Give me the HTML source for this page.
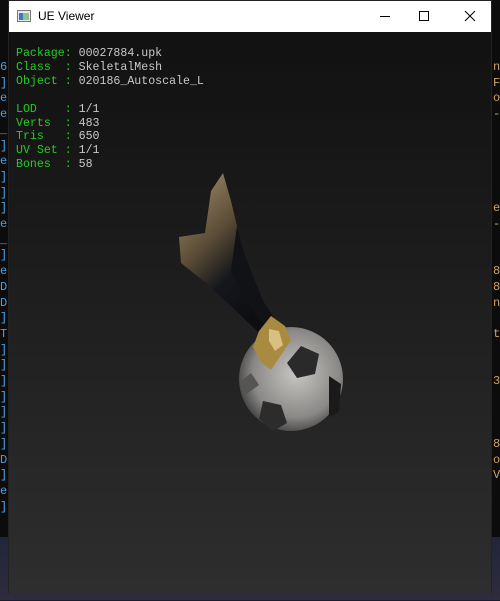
<!DOCTYPE html>
<html><head><style>
body{margin:0;width:500px;height:600px;overflow:hidden;background:#1a1d2a;position:relative;font-family:"Liberation Mono",monospace}
.bg{position:absolute;left:0;top:0;width:500px;height:537px;background:#0c0c0c}
.wall{position:absolute;left:0;top:537px;width:500px;height:63px;background:linear-gradient(#22263a,#2e2b3e)}
.ls{position:absolute;left:0;top:60px;font-size:12px;line-height:15.7px;color:#4aa0e0}
.rs{position:absolute;left:493px;top:60px;font-size:12px;line-height:15.7px;color:#d0a060}
.win{position:absolute;left:8px;top:0;width:484px;height:593px;border:1px solid #222;box-sizing:border-box}
.title{height:31px;background:#fff;position:relative;font-family:"Liberation Sans",sans-serif;font-size:12px}
.body{height:561px;background:linear-gradient(#111 0%,#1c1c1c 40%,#2e2e2e 100%);position:relative}
.info{position:absolute;left:7px;top:15px;font-size:11.6px;line-height:13.9px;color:#c8c8c8;white-space:pre}
.g{color:#22cc22}
</style></head><body>
<div class="bg"></div><div class="wall"></div>
<div class="ls">6<br>]<br>e<br>e<br>_<br>]<br>e<br>]<br>]<br>]<br>e<br>_<br>]<br>e<br>D<br>D<br>]<br>T<br>]<br>]<br>]<br>]<br>]<br>]<br>]<br>D<br>]<br>e<br>]</div>
<div class="rs">n<br>F<br>o<br>-<br><br><br><br><br><br>e<br>-<br><br><br>8<br>8<br>n<br><br>t<br><br><br>3<br><br><br><br>8<br>o<br>V</div>
<div class="win">
<div class="title">
<svg style="position:absolute;left:8px;top:9px" width="14" height="12"><rect x="0.5" y="0.5" width="13" height="11" fill="#e8e8e8" stroke="#777"/><rect x="2" y="3" width="4" height="7" fill="#3a7abf"/><rect x="6" y="3" width="6" height="7" fill="#8fc08f"/></svg>
<span style="position:absolute;left:29px;top:8px;color:#000">UE Viewer</span>
<svg style="position:absolute;left:370px;top:9px" width="12" height="12"><line x1="1" y1="6.5" x2="11" y2="6.5" stroke="#000"/></svg>
<svg style="position:absolute;left:409px;top:9px" width="12" height="12"><rect x="1.5" y="1.5" width="9" height="9" fill="none" stroke="#000"/></svg>
<svg style="position:absolute;left:455px;top:9px" width="12" height="12"><path d="M1 1L11 11M11 1L1 11" stroke="#000"/></svg>
</div>
<div class="body">
<div class="info"><span class="g">Package:</span> 00027884.upk
<span class="g">Class  :</span> SkeletalMesh
<span class="g">Object :</span> 020186_Autoscale_L

<span class="g">LOD    :</span> 1/1
<span class="g">Verts  :</span> 483
<span class="g">Tris   :</span> 650
<span class="g">UV Set :</span> 1/1
<span class="g">Bones  :</span> 58</div>
<svg style="position:absolute;left:-8px;top:-31px" width="500" height="600">
<defs>
<linearGradient id="tr" x1="0" y1="0" x2="0.6" y2="1"><stop offset="0" stop-color="#a89470"/><stop offset="0.45" stop-color="#5a4c36"/><stop offset="0.7" stop-color="#15171c"/><stop offset="1" stop-color="#0d0e12"/></linearGradient>
<radialGradient id="bl" cx="0.55" cy="0.45" r="0.6"><stop offset="0" stop-color="#c8c6c2"/><stop offset="0.7" stop-color="#8a8886"/><stop offset="1" stop-color="#3a3a3a"/></radialGradient>
</defs>
<path d="M222 172L230 200L236 225L244 255L262 300L275 320L258 332L230 305L205 282L180 262L178 236L204 232L210 190Z" fill="url(#tr)"/>
<path d="M236 225L244 255L262 300L275 320L265 328L245 300L230 270Z" fill="#101216"/>
<circle cx="290" cy="378" r="52" fill="url(#bl)"/>
<path d="M300 345l18 8l-4 20l-18 4l-10-15Z" fill="#2a2a2a"/>
<path d="M328 375l12 8l-2 28l-10 5Z" fill="#1a1a1a"/>
<path d="M262 400l18 4l6 18l-14 8l-14-12Z" fill="#2c2c2c"/>
<path d="M240 380l10-8l8 12l-14 10Z" fill="#555"/>
<path d="M258 330l12-15l14 10l6 14l-8 12l-12 18l-10-8l-8-15Z" fill="#a88a40"/>
<path d="M268 328l10 2l4 14l-8 6l-6-10Z" fill="#d8c080"/>
</svg>
</div>
</div>
</body></html>
